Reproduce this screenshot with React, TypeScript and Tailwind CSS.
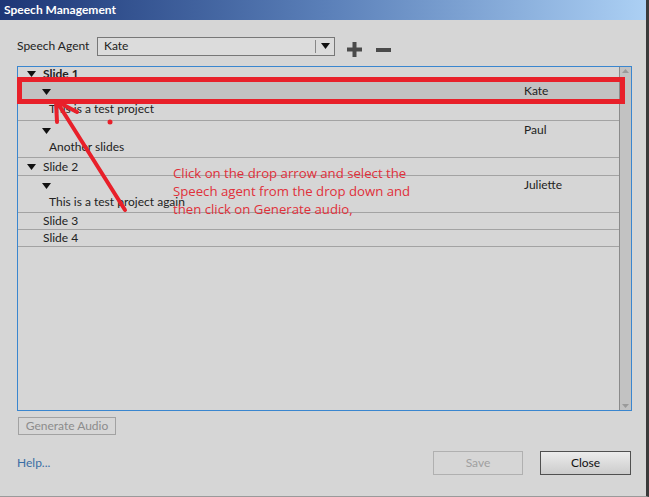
import React from "react";

const font = { fontFamily: 'Lato, "Noto Sans", "Liberation Sans", sans-serif' };

function Tri({ className = "" }: { className?: string }) {
  return (
    <svg width="9" height="6" viewBox="0 0 9 6" className={className}>
      <path d="M0 0 H9 L4.5 6 Z" fill="#111" />
    </svg>
  );
}

function SlideRow({ label, h, bold = false, arrow = false }: { label: string; h: string; bold?: boolean; arrow?: boolean }) {
  return (
    <div className={`${h} flex items-center border-b border-[#a3a3a3] mr-[12px]`}>
      <div className="w-[25px] flex justify-center pl-[1px]">{arrow && <Tri />}</div>
      <span className={`text-[12px] text-[#222] ${bold ? "font-bold" : ""}`}>{label}</span>
    </div>
  );
}

function AgentRow({ text, agent, h, highlight = false }: { text: string; agent: string; h: string; highlight?: boolean }) {
  return (
    <div className={`${h} flex flex-col border-b border-[#a3a3a3] mr-[12px]`}>
      <div className={`h-[18px] shrink-0 flex items-center ${highlight ? "bg-[#c2c2c2]" : ""}`}>
        <div className="w-[24px]" />
        <Tri className="mt-[1px]" />
        <div className="flex-1" />
        <span className="w-[95px] text-[12px] text-[#222]">{agent}</span>
      </div>
      <div className={`h-[15px] ${highlight ? "mt-[1px]" : ""} flex items-center pl-[31px] text-[12px] text-[#222]`}>{text}</div>
    </div>
  );
}

export default function App() {
  return (
    <div className="relative w-[649px] h-[497px] bg-[#d6d6d6] overflow-hidden border-r-[3px] border-r-[#3a3a3a] border-b border-b-[#9a9a9a]" style={font}>
      {/* Title bar */}
      <div className="h-[20px] flex items-center pl-[4px] bg-gradient-to-r from-[#1d3676] via-[#5a7fb8] to-[#acd0f4]">
        <span className="text-white font-bold text-[12px]">Speech Management</span>
      </div>

      {/* Agent selection */}
      <div className="flex items-center h-[20px] mt-[16px] pl-[17px]">
        <span className="text-[12px] text-[#222] w-[80px]">Speech Agent</span>
        <div className="w-[238px] h-[19px] border border-[#777] bg-[#dcdcdc] flex items-center">
          <span className="flex-1 pl-[6px] text-[12px] text-[#222]">Kate</span>
          <div className="w-px h-[13px] bg-[#888]" />
          <div className="w-[18px] flex justify-center"><Tri /></div>
        </div>
        <svg width="15" height="15" viewBox="0 0 15 15" className="ml-[12px] mt-[7px]">
          <rect x="5.5" y="0" width="4" height="15" fill="#4a4a4a" />
          <rect x="0" y="5.5" width="15" height="4" fill="#4a4a4a" />
        </svg>
        <svg width="15" height="4" viewBox="0 0 15 4" className="ml-[14px] mt-[7px]">
          <rect x="0" y="0" width="15" height="4" fill="#4a4a4a" />
        </svg>
      </div>

      {/* List */}
      <div className="relative ml-[17px] mt-[10px] w-[615px] h-[345px] border border-[#3a86cf] bg-[#d6d6d6]">
        <div className="flex flex-col">
          <SlideRow label="Slide 1" h="h-[15px]" bold arrow />
          <AgentRow text="This is a test project" agent="Kate" h="h-[39px]" highlight />
          <AgentRow text="Another slides" agent="Paul" h="h-[37px]" />
          <SlideRow label="Slide 2" h="h-[18px]" arrow />
          <AgentRow text="This is a test project again" agent="Juliette" h="h-[37px]" />
          <SlideRow label="Slide 3" h="h-[17px]" />
          <SlideRow label="Slide 4" h="h-[17px]" />
        </div>
        {/* Scrollbar */}
        <div className="absolute right-0 top-0 bottom-0 w-[12px] bg-[#c2c2c2] border-l border-[#8a8a8a] flex flex-col justify-between items-center py-[2px]">
          <svg width="7" height="4" viewBox="0 0 7 4"><path d="M0 4 L3.5 0 L7 4 Z" fill="#9a9a9a" /></svg>
          <svg width="7" height="4" viewBox="0 0 7 4"><path d="M0 0 L7 0 L3.5 4 Z" fill="#9a9a9a" /></svg>
        </div>
      </div>

      {/* Generate Audio */}
      <div className="ml-[18px] mt-[6px] w-[98px] h-[18px] border border-[#a2a2a2] flex items-center justify-center text-[12px] text-[#8c8c8c]">
        Generate Audio
      </div>

      {/* Footer */}
      <div className="flex items-center mt-[16px] pl-[17px] pr-[15px]">
        <span className="text-[12px] text-[#3a6ea5]">Help...</span>
        <div className="flex-1" />
        <div className="w-[90px] h-[24px] border border-[#b0b0b0] flex items-center justify-center text-[12px] text-[#a0a0a0]">Save</div>
        <div className="w-[91px] h-[24px] ml-[17px] border border-[#505050] bg-gradient-to-b from-[#ececec] to-[#cccccc] flex items-center justify-center text-[12px] text-[#111]">Close</div>
      </div>

      {/* Red annotation overlay */}
      <svg className="absolute left-0 top-0 pointer-events-none" width="649" height="497" viewBox="0 0 649 497">
        <rect x="19.5" y="79.5" width="603" height="22" fill="none" stroke="#e8202a" strokeWidth="5" />
        <g stroke="#e8202a" strokeWidth="4" strokeLinecap="round" fill="none">
          <line x1="125" y1="210" x2="57" y2="102" />
          <line x1="56" y1="101" x2="57" y2="122" />
          <line x1="56" y1="101" x2="77" y2="112" />
        </g>
        <circle cx="110" cy="122" r="2.5" fill="#e8202a" />
      </svg>
      <div className="absolute left-[173px] top-[164px] text-[13.2px] leading-[18px] text-[#e0303a]" style={{ fontFamily: '"Open Sans", "Noto Sans", sans-serif' }}>
        <div>Click on the drop arrow and select the</div>
        <div>Speech agent from the drop down and</div>
        <div>then click on Generate audio,</div>
      </div>
    </div>
  );
}
